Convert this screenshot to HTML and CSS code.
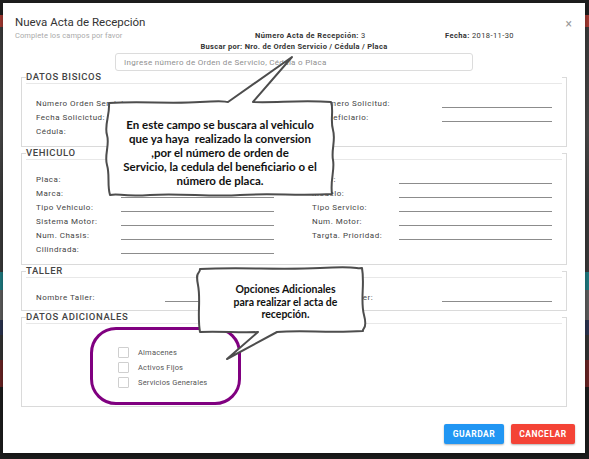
FILE: index.html
```html
<!DOCTYPE html>
<html lang="es">
<head>
<meta charset="utf-8">
<title>Nueva Acta de Recepción</title>
<link rel="stylesheet" href="styles.css">
</head>
<body>
<div class="modal">
  <div class="modal-header">
    <h1 class="title">Nueva Acta de Recepción</h1>
    <span class="close">×</span>
  </div>
  <div class="info-row">
    <span class="subtitle">Complete los campos por favor</span>
    <span class="info"><b>Número Acta de Recepción:</b> 3</span>
    <span class="info"><b>Fecha:</b> 2018-11-30</span>
  </div>
  <div class="search-label">Buscar por: Nro. de Orden Servicio / Cédula / Placa</div>
  <input class="search" type="text" placeholder="Ingrese número de Orden de Servicio, Cédula o Placa">

  <fieldset class="box">
    <legend>DATOS BISICOS</legend>
    <div class="rows g-basics">
      <span class="lbl">Número Orden Servicio:</span><span class="val"></span>
      <span class="lbl r">Número Solicitud:</span><span class="val"></span>
      <span class="lbl">Fecha Solicictud:</span><span class="val"></span>
      <span class="lbl r">Beneficiario:</span><span class="val"></span>
      <span class="lbl">Cédula:</span><span class="val"></span>
    </div>
  </fieldset>

  <fieldset class="box">
    <legend>VEHICULO</legend>
    <div class="rows g-veh">
      <span class="lbl">Placa:</span><span class="val"></span>
      <span class="lbl r">Color:</span><span class="val"></span>
      <span class="lbl">Marca:</span><span class="val"></span>
      <span class="lbl r">Modelo:</span><span class="val"></span>
      <span class="lbl">Tipo Vehiculo:</span><span class="val"></span>
      <span class="lbl r">Tipo Servicio:</span><span class="val"></span>
      <span class="lbl">Sistema Motor:</span><span class="val"></span>
      <span class="lbl r">Num. Motor:</span><span class="val"></span>
      <span class="lbl">Num. Chasis:</span><span class="val"></span>
      <span class="lbl r">Targta. Prioridad:</span><span class="val"></span>
      <span class="lbl">Cilindrada:</span><span class="val"></span>
    </div>
  </fieldset>

  <fieldset class="box box-taller">
    <legend>TALLER</legend>
    <div class="rows g-taller">
      <span class="lbl">Nombre Taller:</span><span class="val"></span>
      <span class="lbl r">Ciudad Taller:</span><span class="val"></span>
    </div>
  </fieldset>

  <fieldset class="box box-extra">
    <legend>DATOS ADICIONALES</legend>
    <div class="checks">
      <label class="check"><span class="cb"></span>Almacenes</label>
      <label class="check"><span class="cb"></span>Activos Fijos</label>
      <label class="check"><span class="cb"></span>Servicios Generales</label>
    </div>
  </fieldset>

  <div class="actions">
    <button class="btn btn-save">GUARDAR</button>
    <button class="btn btn-cancel">CANCELAR</button>
  </div>
</div>

<div class="highlight"></div>

<svg class="bubbles" width="589" height="459" viewBox="0 0 589 459">
  <path class="bubble" d="M109,103 C140,101 170,104 200,102 S222,102 228,102 L292,57 L253,102 C275,103 300,100 331,102 C334,110 330,120 333,130 S331,150 333,160 S330,180 332,194 C300,196 270,193 240,195 S180,193 150,195 S120,193 110,195 C107,185 110,175 107,165 S110,145 107,135 S110,115 109,103 Z"/>
  <path class="bubble" d="M200,269 C240,267 280,270 320,268 S355,269 362,268 C365,285 360,300 364,315 S362,328 363,331 C330,333 300,330 277,332 L227,359 L258,332 C240,333 220,331 200,332 C197,315 201,300 198,285 S200,275 200,269 Z"/>
</svg>

<div class="note note-search">En este campo se buscara al vehiculo<br>que ya haya&nbsp; realizado la conversion<br>,por el número de orden de<br>Servicio, la cedula del beneficiario o el<br>número de placa.</div>
<div class="note note-extra">Opciones Adicionales<br>para realizar el acta de<br>recepción.</div>
</body>
</html>
```
FILE: styles.css
```css
* { box-sizing: border-box; }

html, body { margin: 0; }

body {
  width: 589px;
  height: 459px;
  overflow: hidden;
  position: relative;
  padding: 3px 4px 6px 3px;
  font-family: Roboto, "Liberation Sans", Arial, sans-serif;
  background:
    linear-gradient(to bottom,
      #1f1f1f 0, #1f1f1f 15px,
      #a63a32 15px, #a63a32 27px,
      #3b3b3b 27px, #4a4a4a 130px,
      #3a3a3a 200px, #3a3a3a 272px,
      #1f7c82 272px, #1f7c82 290px,
      #5e5e5e 290px, #5e5e5e 320px,
      #2b3450 320px, #2b3450 335px,
      #333 335px, #333 360px,
      #6a2424 360px, #6a2424 387px,
      #1d1d1d 387px);
}

.modal {
  width: 582px;
  height: 450px;
  background: #fff;
  display: flex;
  flex-direction: column;
  box-shadow: 0 2px 6px rgba(0,0,0,.4);
}

.modal-header {
  display: flex;
  justify-content: space-between;
  align-items: flex-start;
  padding: 12px 13px 0 12px;
}

.title {
  margin: 0;
  font-size: 11.5px;
  line-height: 14px;
  font-weight: 400;
  color: #333;
}

.close {
  font-size: 12px;
  line-height: 14px;
  color: #9a9a9a;
  margin-top: 2px;
}

.info-row {
  display: grid;
  grid-template-columns: 240px 190px 1fr;
  padding-left: 12px;
  height: 10px;
  line-height: 10px;
  font-size: 7.5px;
}

.subtitle { color: #aaa; letter-spacing: .1px; }
.info { color: #333; letter-spacing: .4px; }
.info b { font-weight: 700; }

.search-label {
  margin-top: 1px;
  text-align: center;
  font-size: 7.5px;
  line-height: 10px;
  font-weight: 700;
  letter-spacing: .3px;
  color: #333;
}

.search {
  display: block;
  width: 358px;
  height: 18px;
  margin: 1px auto 0;
  padding: 0 8px;
  border: 1px solid #dcdcdc;
  border-radius: 3px;
  font-family: inherit;
  font-size: 8px;
  letter-spacing: .3px;
  color: #333;
  outline: none;
}
.search::placeholder { color: #8f8f8f; }

.box {
  margin: 0 18px;
  padding: 0 4px 7px;
  border: 1px solid #dadada;
  min-width: 0;
}

.box legend {
  width: 100%;
  padding: 0;
  font-size: 9.5px;
  line-height: 12px;
  font-weight: 500;
  letter-spacing: .6px;
  color: #444;
  border-bottom: 1px solid #e8e8e8;
}

.rows {
  display: grid;
  grid-auto-rows: 14px;
  padding-left: 10px;
  margin-top: 13px;
}

.g-basics { grid-template-columns: 114px 124px 44px 124px 110px; }
.g-veh    { grid-template-columns: 85px 153px 38px 87px 153px; }
.g-taller { grid-template-columns: 129px 109px 44px 124px 110px; }

.box-taller { padding-bottom: 5px; }

.lbl {
  font-size: 8px;
  line-height: 14px;
  letter-spacing: .5px;
  color: #444;
  white-space: nowrap;
}
.lbl.r { grid-column: 4; }

.val {
  height: 11px;
  border-bottom: 1px solid #8c8c8c;
}

.box-extra { padding-bottom: 16px; }

.checks {
  display: flex;
  flex-direction: column;
  padding-left: 92px;
  margin-top: 21px;
}

.check {
  display: flex;
  align-items: center;
  height: 15px;
  font-size: 7.5px;
  letter-spacing: .2px;
  color: #555;
}

.cb {
  width: 11px;
  height: 11px;
  border: 1px solid #cfcfcf;
  border-radius: 1px;
  margin-right: 9px;
}

.actions {
  display: flex;
  justify-content: flex-end;
  gap: 7px;
  padding-right: 10px;
  margin-top: 17px;
}

.btn {
  height: 20px;
  border: 0;
  border-radius: 2px;
  padding: 0;
  font-family: inherit;
  font-size: 8.5px;
  font-weight: 700;
  letter-spacing: .5px;
  color: #fff;
  box-shadow: 0 1px 2px rgba(0,0,0,.3);
}
.btn-save { width: 60px; background: #2196f3; }
.btn-cancel { width: 64px; background: #f44336; }

.highlight {
  position: absolute;
  left: 90px;
  top: 327px;
  width: 151px;
  height: 78px;
  border: 3px solid #800080;
  border-radius: 26px;
}

.bubbles {
  position: absolute;
  left: 0;
  top: 0;
}

.bubble {
  fill: #fff;
  stroke: #4d4d4d;
  stroke-width: 2;
  stroke-linejoin: round;
}

.note {
  position: absolute;
  text-align: center;
  font-family: Lato, "Open Sans", sans-serif;
  font-weight: 700;
  color: #111;
  font-size: 11.5px;
  line-height: 14px;
}

.note-search {
  left: 107px;
  top: 118px;
  width: 226px;
}

.note-extra {
  left: 203px;
  top: 283px;
  width: 165px;
  font-size: 10.5px;
  line-height: 12.5px;
}
```
